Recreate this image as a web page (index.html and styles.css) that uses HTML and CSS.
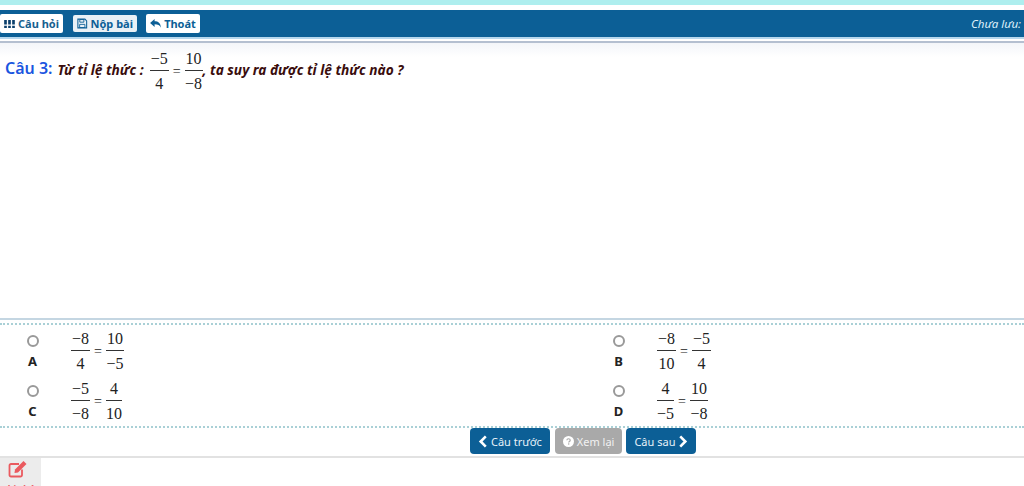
FILE: index.html
```html
<!DOCTYPE html>
<html lang="vi">
<head>
<meta charset="utf-8">
<title>Câu hỏi</title>
<link rel="stylesheet" href="styles.css">
</head>
<body>
<div class="topstrip"></div>
<header class="bar">
  <button class="tool tool-q"><svg class="ico" viewBox="0 0 12 9" width="11" height="8"><path d="M0 0h3v5.200H0zM4.500 0h3v5.200h-3zM9 0h3v5.200H9zM0 6.600h3V9H0zM4.500 6.600h3V9h-3zM9 6.600h3V9H9z" fill="#0b3f6b"/></svg>Câu hỏi</button>
  <button class="tool tool-s"><svg class="ico" viewBox="0 0 12 12" width="11" height="11"><path d="M1 1h8l2 2v8H1z" fill="none" stroke="#0c5f96" stroke-width="1.200"/><path d="M3.200 1.500h4.600v3H3.200zM3 7h6v3.600H3z" fill="none" stroke="#0c5f96" stroke-width="1"/></svg>Nộp bài</button>
  <button class="tool tool-t"><svg class="ico" viewBox="0 0 12 10" width="11" height="9"><path d="M5 0v2.600c4 0 6.600 1.800 7 7-1.200-2.800-3.400-3.700-7-3.700V9L0 4.500z" fill="#0c5f96"/></svg>Thoát</button>
  <span class="status">Chưa lưu:</span>
</header>
<div class="barline"></div>
<main class="question">
  <span class="qnum">Câu 3:</span>
  <span class="qtext">Từ tỉ lệ thức :</span>
  <span class="math">
    <span class="frac"><span class="top">−5</span><span class="bot">4</span></span><span class="eq">=</span><span class="frac"><span class="top">10</span><span class="bot">−8</span></span>
  </span><span class="qtext">, ta suy ra được tỉ lệ thức nào ?</span>
</main>
<section class="answers">
  <div class="answer">
    <div class="pick"><span class="radio"></span><b>A</b></div>
    <span class="math"><span class="frac"><span class="top">−8</span><span class="bot">4</span></span><span class="eq">=</span><span class="frac"><span class="top">10</span><span class="bot">−5</span></span></span>
  </div>
  <div class="answer">
    <div class="pick"><span class="radio"></span><b>B</b></div>
    <span class="math"><span class="frac"><span class="top">−8</span><span class="bot">10</span></span><span class="eq">=</span><span class="frac"><span class="top">−5</span><span class="bot">4</span></span></span>
  </div>
  <div class="answer">
    <div class="pick"><span class="radio"></span><b>C</b></div>
    <span class="math"><span class="frac"><span class="top">−5</span><span class="bot">−8</span></span><span class="eq">=</span><span class="frac"><span class="top">4</span><span class="bot">10</span></span></span>
  </div>
  <div class="answer">
    <div class="pick"><span class="radio"></span><b>D</b></div>
    <span class="math"><span class="frac"><span class="top">4</span><span class="bot">−5</span></span><span class="eq">=</span><span class="frac"><span class="top">10</span><span class="bot">−8</span></span></span>
  </div>
</section>
<nav class="pager">
  <button class="nav nav-prev"><svg viewBox="0 0 10 14" width="10" height="13"><path d="M8 1.500L2.500 7 8 12.500" fill="none" stroke="#fff" stroke-width="2.800"/></svg>Câu trước</button>
  <button class="nav nav-grey"><svg viewBox="0 0 12 12" width="11" height="11"><circle cx="6" cy="6" r="6" fill="#fff"/><path d="M4.200 4.600C4.300 3.500 5 3 6 3s1.900.6 1.900 1.600c0 1.400-1.700 1.300-1.700 2.500" fill="none" stroke="#a9a9a9" stroke-width="1.300"/><rect x="5.500" y="8" width="1.400" height="1.400" fill="#a9a9a9"/></svg>Xem lại</button>
  <button class="nav">Câu sau<svg viewBox="0 0 10 14" width="10" height="13"><path d="M2 1.500L7.500 7 2 12.500" fill="none" stroke="#fff" stroke-width="2.800"/></svg></button>
</nav>
<footer class="foot">
  <div class="note"><svg class="noteicon" viewBox="0 0 20 18" width="20" height="18"><path d="M14 9.500V15a1.500 1.500 0 0 1-1.500 1.500H3A1.500 1.500 0 0 1 1.500 15V5.500A1.500 1.500 0 0 1 3 4h8" fill="none" stroke="#ea5a5f" stroke-width="1.800"/><path d="M7 9.500L15.500 1l3 3L10 12.500l-3.500.5z" fill="#ea5a5f"/></svg><span class="notelabel">Ghi chú</span></div>
</footer>
</body>
</html>
```
FILE: styles.css
```css
* { box-sizing: border-box; }
html, body { margin: 0; padding: 0; }
body { width: 1024px; height: 486px; overflow: hidden; background: #fff; font-family: "Noto Sans", sans-serif; color: #111; display: flex; flex-direction: column; }
.topstrip { height: 5px; background: #aeeeee; flex: none; }
.bar { margin-top: 5px; height: 27px; background: #0c5f96; display: flex; align-items: center; padding: 0 3px 0 0; flex: none; }
.tool { height: 19px; border: 0; border-radius: 2px; background: #fff; color: #0c5f96; font: 700 11px "Noto Sans", sans-serif; padding: 0 4px; display: inline-flex; align-items: center; gap: 3px; white-space: nowrap; }
.tool-q { width: 63px; margin-right: 10px; color: #17608f; }
.tool-s { width: 64px; margin-right: 9px; height: 17px; background: #e9f1f6; }
.tool-t { width: 54px; justify-content: center; }
.status { margin-left: auto; color: #dff1fb; font-size: 11.500px; font-style: italic; }
.barline { height: 6px; flex: none; border-top: 2px solid #b7d8ee; border-bottom: 2px solid #b4bfd0; background: #fff; }
.question { height: 277px; flex: none; padding: 5px 0 0 5px; display: flex; align-items: flex-start; border-bottom: 2px solid #c4d6e2; background: linear-gradient(#f3f5f9, #fff 14px); }
.qnum { color: #1a55e0; font-size: 16px; font-weight: 600; margin: 9px 5px 0 0; line-height: 22px; }
.qtext { color: #3a0d0d; font-size: 13.700px; font-weight: 700; font-style: italic; margin-top: 13px; line-height: 18px; }
.question .math { margin: 1px 0 0 6px; }
.math { display: inline-flex; align-items: center; font-family: "Liberation Serif", serif; font-size: 16px; color: #222; }
.frac { display: inline-flex; flex-direction: column; align-items: stretch; text-align: center; line-height: 19px; }
.top { border-bottom: 1px solid #333; padding: 0 1px 2px; }
.bot { padding-top: 3px; }
.eq { margin: 1px 4px 0; font-size: 14px; }
.answers { height: 105px; flex: none; margin-top: 3px; border-top: 2px dotted #a9d0d6; border-bottom: 2px dotted #a9d0d6; display: grid; grid-template-columns: 586px 1fr; grid-auto-rows: 50px; padding: 1px 0 0 0; }
.answer { display: flex; align-items: center; }
.pick { width: 71px; display: flex; flex-direction: column; align-items: center; padding-right: 6px; gap: 7px; flex: none; }
.pick b { font-size: 13px; line-height: 14px; color: #222; }
.radio { width: 12px; height: 12px; border: 2px solid #999; border-radius: 50%; background: #fff; }
.pager { height: 30px; flex: none; display: flex; align-items: flex-start; gap: 4px; padding-left: 470px; border-bottom: 2px solid #e2e2e2; }
.nav { height: 26px; border: 0; border-radius: 4px; background: #0c5f96; color: #e8f2f9; font: 400 11px "Noto Sans", sans-serif; padding: 0 8px; display: inline-flex; align-items: center; gap: 3px; white-space: nowrap; }
.nav-prev { margin-right: 1px; }
.nav-grey { background: #a9a9a9; color: #f2f2f2; }
.foot { flex: 1; min-height: 0; overflow: hidden; }
.note { width: 41px; height: 100%; background: #ececec; display: flex; flex-direction: column; align-items: center; gap: 5px; padding: 2px 5px 0 0; }
.noteicon { flex: none; }
.notelabel { color: #ea5a5f; font-size: 9px; font-weight: 700; white-space: nowrap; line-height: 12px; flex: none; }
```
